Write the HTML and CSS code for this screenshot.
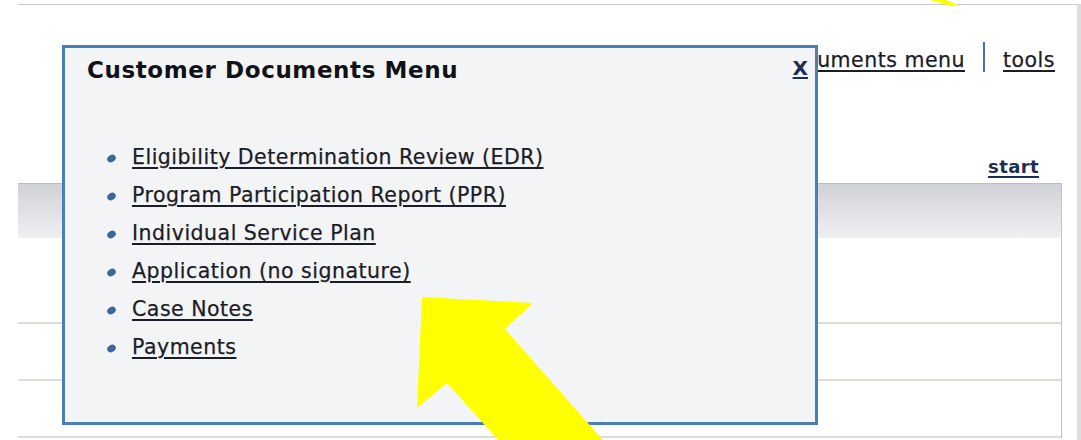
FILE: index.html
```html
<!DOCTYPE html>
<html lang="en">
<head>
<meta charset="utf-8">
<title>Customer Documents</title>
<link rel="stylesheet" href="styles.css">
</head>
<body>
<div class="page">
  <nav class="top-nav">
    <a href="#" class="nav-link">customer documents menu</a>
    <span class="nav-sep"></span>
    <a href="#" class="nav-link">tools</a>
  </nav>
  <div class="start-row"><a href="#" class="start-link">start</a></div>
  <div class="grid">
    <div class="grid-head"></div>
    <div class="grid-row tall"></div>
    <div class="grid-row"></div>
    <div class="grid-row"></div>
  </div>
</div>

<div class="menu-popup">
  <h2 class="menu-title">Customer Documents Menu</h2>
  <a href="#" class="menu-close">X</a>
  <ul class="menu-list">
    <li><a href="#">Eligibility Determination Review (EDR)</a></li>
    <li><a href="#">Program Participation Report (PPR)</a></li>
    <li><a href="#">Individual Service Plan</a></li>
    <li><a href="#">Application (no signature)</a></li>
    <li><a href="#">Case Notes</a></li>
    <li><a href="#">Payments</a></li>
  </ul>
</div>

<svg class="callouts" width="1081" height="440" viewBox="0 0 1081 440" aria-hidden="true">
  <polygon fill="#ffff00" points="422,297 533,303 505,329 640,482 536,482 447,383 417,408"/>
  <polygon fill="#ffff00" points="930,0 946,0 958,5 951,6"/>
</svg>
</body>
</html>
```

FILE: styles.css
```css
html, body {
  margin: 0;
  padding: 0;
  background: #ffffff;
}

body {
  width: 1081px;
  height: 440px;
  overflow: hidden;
  position: relative;
  font-family: "DejaVu Sans", Verdana, sans-serif;
  color: #1d1d28;
}

.page {
  margin: 4px 0 0 18px;
  border-top: 1px solid #cacaca;
  border-right: 4px solid #dedede;
  height: 436px;
  box-sizing: border-box;
}

.top-nav {
  display: flex;
  justify-content: flex-end;
  align-items: flex-end;
  gap: 18px;
  padding: 37px 22px 0 0;
  font-size: 20.5px;
  line-height: 24px;
  letter-spacing: 0.5px;
}

.nav-link,
.menu-list a {
  color: #1c1c28;
  text-decoration: underline;
  text-decoration-thickness: 2px;
  text-underline-offset: 3px;
  -webkit-text-stroke: 0.25px #1c1c28;
}

.nav-sep {
  width: 2px;
  height: 30px;
  background: #3f74ad;
}

.start-row {
  display: flex;
  justify-content: flex-end;
  padding: 84px 38px 0 0;
  font-size: 18px;
  line-height: 22px;
  font-weight: bold;
  letter-spacing: 0.4px;
}

.start-link {
  color: #1b2f52;
  text-decoration: underline;
  text-decoration-thickness: 2px;
  text-underline-offset: 3px;
}

.grid {
  margin: 5px 15px 0 0;
  border-right: 1px solid #c4c4c4;
}

.grid-head {
  height: 54px;
  border-top: 1px solid #bdbdbd;
  background: linear-gradient(#d0d2d7, #eef0f2);
}

.grid-row {
  height: 55px;
  border-bottom: 2px solid #dddcd6;
}

.grid-row.tall {
  height: 84px;
}

.menu-popup {
  position: absolute;
  left: 62px;
  top: 45px;
  width: 756px;
  height: 380px;
  box-sizing: border-box;
  border: 3px solid #4a7eb5;
  background: #f3f4f6;
  padding: 9px 22px 0 22px;
}

.menu-title {
  margin: 0;
  font-size: 23px;
  line-height: 27px;
  font-weight: bold;
  letter-spacing: 0.6px;
  color: #111118;
}

.menu-close {
  position: absolute;
  top: 8px;
  right: 7px;
  font-size: 20px;
  line-height: 24px;
  font-weight: bold;
  color: #1c2d50;
  text-decoration: underline;
  text-decoration-thickness: 2px;
  text-underline-offset: 2px;
}

.menu-list {
  list-style: none;
  margin: 54px 0 0 45px;
  padding: 0;
  font-size: 20.5px;
  line-height: 38px;
  letter-spacing: 0.5px;
}

.menu-list li {
  position: relative;
}

.menu-list li::before {
  content: "";
  position: absolute;
  left: -25px;
  top: 17px;
  width: 9px;
  height: 7px;
  border-radius: 50%;
  background: #36699f;
  transform: rotate(-30deg);
}

.callouts {
  position: absolute;
  left: 0;
  top: 0;
  pointer-events: none;
}
```
